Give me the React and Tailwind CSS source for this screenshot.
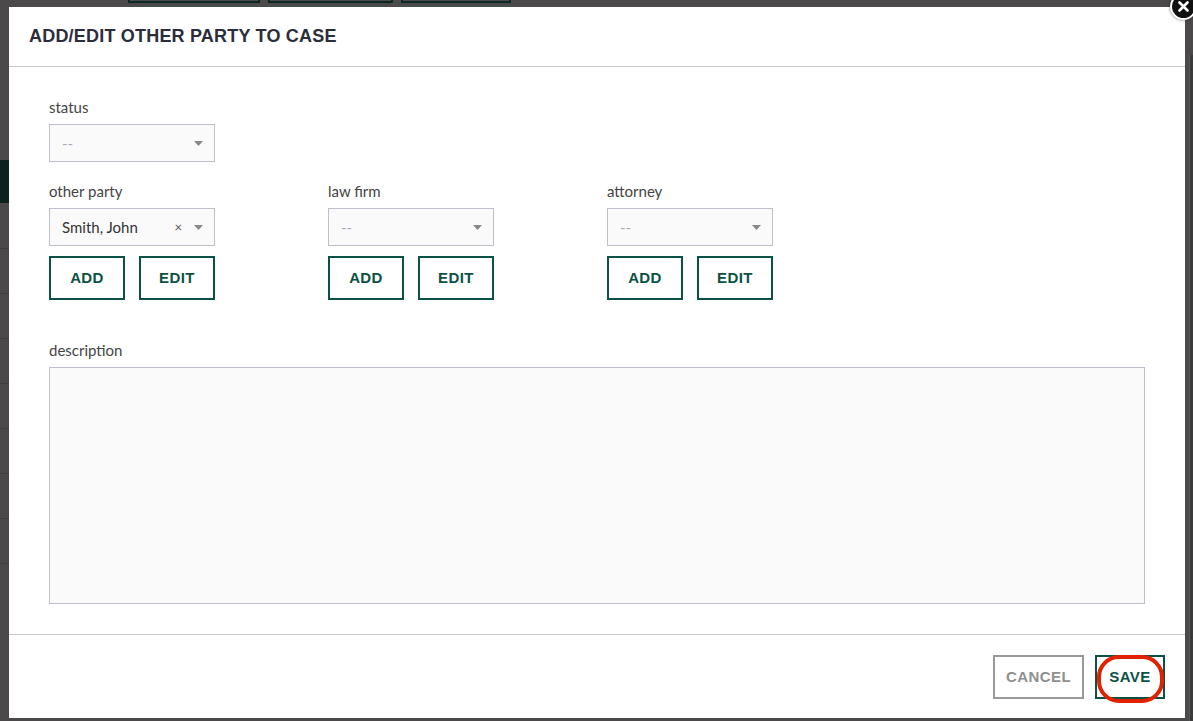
import { useState } from 'react'

const font = { fontFamily: '"Lato", "Open Sans", "Liberation Sans", sans-serif' }
const heavy = { fontFamily: '"Liberation Sans", Arial, sans-serif' }

const Caret = () => (
  <svg width="9" height="5" viewBox="0 0 9 5" className="shrink-0">
    <path d="M0 0h9L4.5 5z" fill="#888" />
  </svg>
)

const Select = ({ value, clearable }) => (
  <div className="flex h-[38px] w-[166px] items-center border border-[#bfbfcc] bg-[#fafafa] pl-3 pr-[11px]">
    <span className={`flex-1 truncate text-[15px] ${value ? 'text-[#333]' : 'text-[#aab]'}`}>{value || '--'}</span>
    {clearable && <span className="mr-3 text-[13px] leading-none text-[#555]">×</span>}
    <Caret />
  </div>
)

const OutlineButton = ({ children, w = 'w-[76px]' }) => (
  <button style={heavy} className={`${w} h-[44px] border-2 border-[#0b5145] bg-white text-[15px] font-bold tracking-[0.4px] text-[#0b5145]`}>
    {children}
  </button>
)

const Label = ({ children, className = '' }) => (
  <label className={`mb-[8px] text-[15px] leading-[17px] text-[#444] ${className}`}>{children}</label>
)

const PartyField = ({ label, value, clearable }) => (
  <div className="flex w-[166px] flex-col">
    <Label>{label}</Label>
    <Select value={value} clearable={clearable} />
    <div className="mt-[10px] flex justify-between">
      <OutlineButton>ADD</OutlineButton>
      <OutlineButton>EDIT</OutlineButton>
    </div>
  </div>
)

export default function App() {
  const [desc, setDesc] = useState('')

  return (
    <div className="relative h-[721px] w-[1193px] overflow-hidden bg-[#4b4949]" style={font}>
      {/* page behind the overlay */}
      <div className="absolute left-[128px] top-[-40px] flex gap-2">
        <div className="h-[43px] w-[132px] border-2 border-[#0c2a25]" />
        <div className="h-[43px] w-[125px] border-2 border-[#0c2a25]" />
        <div className="h-[43px] w-[110px] border-2 border-[#0c2a25]" />
      </div>
      <div className="absolute left-0 top-[160px] h-[43px] w-[9px] bg-[#0d211f]" />
      <div className="absolute left-0 top-[248px] flex w-[9px] flex-col">
        {[0, 1, 2, 3, 4, 5, 6, 7].map((i) => (
          <div key={i} className="h-[45px] border-t border-[#3f3d3d]" />
        ))}
      </div>
      <div className="absolute right-0 top-[55px] bottom-0 w-[4px] border-l border-[#5a5858] bg-[#3c3b3b]" />

      {/* modal */}
      <div className="absolute left-[9px] top-[7px] flex h-[711px] w-[1176px] flex-col bg-white">
        <div className="flex h-[60px] shrink-0 items-center border-b border-[#c8c8c8] px-[20px]">
          <h2 style={heavy} className="text-[18px] font-bold tracking-[0.2px] text-[#2b2d3a]">ADD/EDIT OTHER PARTY TO CASE</h2>
        </div>

        <div className="flex flex-1 flex-col px-[40px] pt-[32px]">
          <div className="flex w-[166px] flex-col">
            <Label>status</Label>
            <Select />
          </div>

          <div className="mt-[21px] flex gap-[113px]">
            <PartyField label="other party" value="Smith, John" clearable />
            <PartyField label="law firm" />
            <PartyField label="attorney" />
          </div>

          <Label className="mt-[42px]">description</Label>
          <textarea
            value={desc}
            onChange={(e) => setDesc(e.target.value)}
            className="h-[237px] w-[1096px] resize-none border border-[#bfbfcc] bg-[#fafafa] outline-none"
          />
        </div>

        <div className="flex h-[84px] shrink-0 items-start justify-end gap-[11px] border-t border-[#c8c8c8] pr-[20px] pt-[20px]">
          <button style={heavy} className="h-[44px] w-[91px] border-2 border-[#999] bg-white text-[15px] font-bold tracking-[0.4px] text-[#8f8f8f]">
            CANCEL
          </button>
          <div className="relative">
            <OutlineButton w="w-[70px]">SAVE</OutlineButton>
            <div className="pointer-events-none absolute left-[2px] top-[0px] h-[48px] w-[67px] rounded-[22px] border-[4px] border-[#e02200]" />
          </div>
        </div>
      </div>

      {/* close */}
      <div className="absolute left-[1170px] top-[-7px] flex h-[27px] w-[27px] items-center justify-center rounded-full border-2 border-white bg-[#111] shadow-[0_0_3px_rgba(0,0,0,0.6)]">
        <svg width="11" height="11" viewBox="0 0 11 11">
          <path d="M1.5 1.5l8 8M9.5 1.5l-8 8" stroke="white" strokeWidth="2.6" strokeLinecap="round" />
        </svg>
      </div>
    </div>
  )
}
